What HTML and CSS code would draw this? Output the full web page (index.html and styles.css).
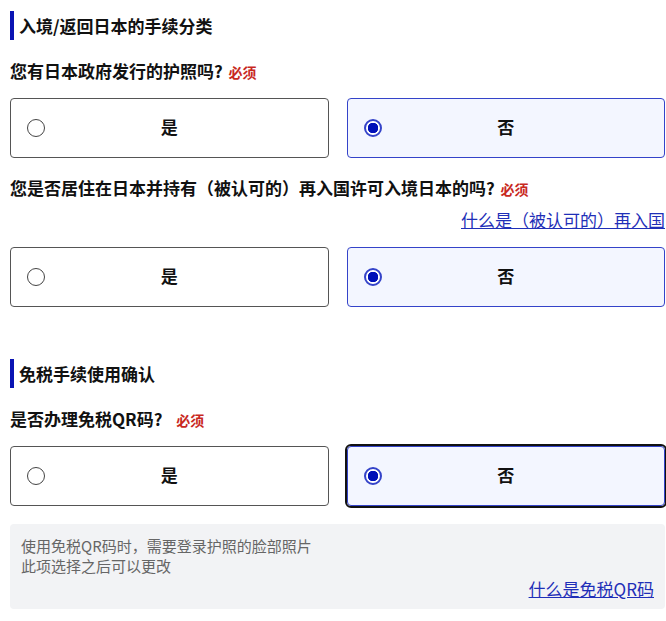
FILE: index.html
```html
<!DOCTYPE html>
<html>
<head>
  <title>入境/返回日本的手续分类</title>
  <link rel="stylesheet" href="styles.css">
</head>
<body>
  <div class="section">
    <h2 class="section-title">入境/返回日本的手续分类</h2>

    <div class="question">您有日本政府发行的护照吗? <span class="required">必须</span></div>
    <div class="options">
      <div class="option"><span class="radio"></span><span class="label">是</span></div>
      <div class="option selected"><span class="radio"></span><span class="label">否</span></div>
    </div>

    <div class="question q-follow">您是否居住在日本并持有（被认可的）再入国许可入境日本的吗? <span class="required">必须</span></div>
    <div class="help-link"><a href="#">什么是（被认可的）再入国</a></div>
    <div class="options">
      <div class="option"><span class="radio"></span><span class="label">是</span></div>
      <div class="option selected"><span class="radio"></span><span class="label">否</span></div>
    </div>
  </div>

  <div class="section section-second">
    <h2 class="section-title">免税手续使用确认</h2>

    <div class="question">是否办理免税QR码? <span class="required wide">必须</span></div>
    <div class="options">
      <div class="option"><span class="radio"></span><span class="label">是</span></div>
      <div class="option selected focused"><span class="radio"></span><span class="label">否</span></div>
    </div>

    <div class="note">
      <p>使用免税QR码时，需要登录护照的脸部照片</p>
      <p>此项选择之后可以更改</p>
      <div class="note-link"><a href="#">什么是免税QR码</a></div>
    </div>
  </div>
</body>
</html>
```

FILE: styles.css
```css
body {
  font-family: "Noto Sans CJK SC", "Noto Sans", sans-serif;
  margin: 0;
  padding: 11px 1px 0 10px;
  color: #111;
  background: #fff;
}
.section-title {
  margin: 0;
  height: 29px;
  line-height: 29px;
  font-size: 17px;
  font-weight: 700;
  border-left: 4px solid #0a14b4;
  padding-left: 5px;
}
.question {
  margin-top: 19px;
  height: 24px;
  font-size: 17px;
  line-height: 24px;
  font-weight: 700;
}
.question.q-follow {
  margin-top: 18px;
}
.required {
  color: #c8281e;
  font-size: 14px;
  line-height: 1;
  font-weight: 700;
  margin-left: 2px;
}
.required.wide {
  margin-left: 10px;
}
.help-link {
  margin-top: 8px;
  text-align: right;
  font-size: 17px;
  line-height: 24px;
}
a {
  color: #1f2fb8;
  text-decoration: underline;
}
.options {
  display: grid;
  grid-template-columns: 1fr 1fr;
  gap: 18px;
  margin-top: 15px;
}
.option {
  height: 60px;
  box-sizing: border-box;
  border: 1px solid #555;
  border-radius: 4px;
  display: grid;
  grid-template-columns: 18px 1fr 18px;
  align-items: center;
  padding: 0 16px;
  font-size: 17px;
  font-weight: 700;
  background: #fff;
}
.option .label {
  text-align: center;
  padding-bottom: 3px;
}
.option.selected {
  border-color: #3443c9;
  background: #f3f6ff;
}
.option.focused {
  outline: 2px solid #111;
}
.radio {
  width: 18px;
  height: 18px;
  box-sizing: border-box;
  border: 1.5px solid #444;
  border-radius: 50%;
  background: #fff;
}
.option.selected .radio {
  border: 2px solid #3443c9;
  background: radial-gradient(circle, #0010b8 0 5px, #fff 5.5px);
}
.section-second {
  margin-top: 52px;
}
.note {
  margin-top: 18px;
  background: #f2f3f5;
  border-radius: 4px;
  padding: 12px 11px 8px;
  color: #666;
  font-size: 15px;
  line-height: 20px;
}
.note p {
  margin: 0;
}
.note-link {
  text-align: right;
  font-size: 17px;
  line-height: 24px;
  margin-top: 1px;
}
```
